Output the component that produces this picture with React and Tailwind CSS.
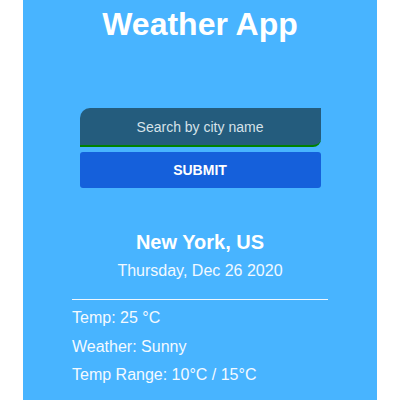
export default function App() {
  const details = [
    "Temp: 25 °C",
    "Weather: Sunny",
    "Temp Range: 10°C / 15°C",
  ];

  return (
    <div className="min-h-screen bg-white font-['Liberation_Sans',Arial,sans-serif]">
      <div className="mx-auto min-h-screen w-[354px] bg-[#48b4ff] pt-[6px] text-white">
        <h1 className="text-center text-[32px] font-bold leading-[37px]">
          Weather App
        </h1>

        <form className="mt-[65px] flex flex-col items-center">
          <input
            type="text"
            placeholder="Search by city name"
            className="h-[39px] w-[241px] rounded-tl-[10px] rounded-br-[8px] border-b-2 border-[#008000] bg-[#245c7d] text-center text-[14px] text-white outline-none placeholder:text-[#d6e2e9]"
          />
          <button
            type="button"
            className="mt-[5px] h-[36px] w-[241px] rounded-[3px] bg-[#1560db] text-[14px] font-bold text-white"
          >
            SUBMIT
          </button>
        </form>

        <div className="mt-[43px] text-center text-[20px] font-bold leading-[23px]">
          New York, US
        </div>
        <div className="mt-[8px] text-center text-[16px] leading-[18px] text-[#f2f9ff]">
          Thursday, Dec 26 2020
        </div>

        <div className="mx-auto mt-[19px] h-px w-[256px] bg-[#eef7ff]" />

        <div className="mx-auto mt-[4px] w-[256px]">
          {details.map((line) => (
            <p key={line} className="text-[16px] leading-[28.5px] text-[#f4faff]">
              {line}
            </p>
          ))}
        </div>
      </div>
    </div>
  );
}
